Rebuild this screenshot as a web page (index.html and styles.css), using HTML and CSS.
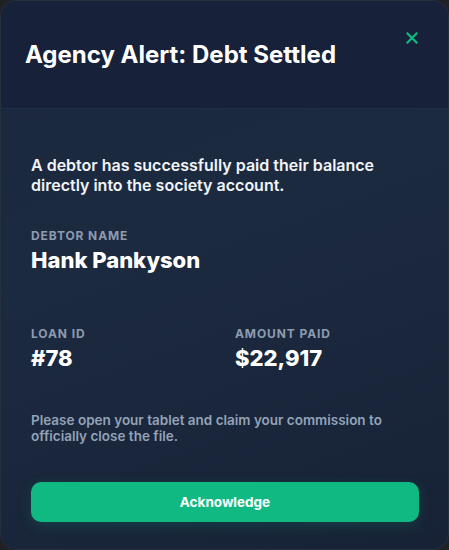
FILE: index.html
```html
<!DOCTYPE html>
<html lang="en">
    <head>
        <meta charset="UTF-8">
        <meta name="viewport" content="width=device-width, initial-scale=1.0">
        <title>Agency Alert</title>
        <link rel="stylesheet" href="styles.css">
    </head>
<body>

    <div class="alert-card">
        <div class="alert-header">
            <h2>Agency Alert: Debt Settled</h2>
            <button class="close-btn" aria-label="Close">
                <svg width="12" height="12" viewBox="0 0 12 12">
                    <path d="M1.5 1.5 L10.5 10.5 M10.5 1.5 L1.5 10.5" stroke="#10b981" stroke-width="2.2" stroke-linecap="square" fill="none"/>
                </svg>
            </button>
        </div>

        <div class="alert-body">
            <p class="intro">A debtor has successfully paid their balance directly into the society account.</p>

            <div class="field">
                <span class="label">Debtor Name</span>
                <span class="value">Hank Pankyson</span>
            </div>

            <div class="field-row">
                <div class="field">
                    <span class="label">Loan ID</span>
                    <span class="value">#78</span>
                </div>
                <div class="field">
                    <span class="label">Amount Paid</span>
                    <span class="value">$22,917</span>
                </div>
            </div>

            <p class="note">Please open your tablet and claim your commission to officially close the file.</p>

            <button class="ack-btn">Acknowledge</button>
        </div>
    </div>

</body>
</html>
```

FILE: styles.css
```css
body {
    font-family: Inter, "Noto Sans", sans-serif;
    background-color: #1f2125;
    margin: 0;
    padding: 0;
    width: 449px;
    height: 550px;
}

.alert-card {
    width: 449px;
    height: 550px;
    box-sizing: border-box;
    border-radius: 16px;
    border: 1px solid #262f3d;
    background: linear-gradient(160deg, #1a273d 0%, #1c2a40 40%, #172236 100%);
    overflow: hidden;
    display: flex;
    flex-direction: column;
}

.alert-header {
    height: 108px;
    box-sizing: border-box;
    padding: 0 24px;
    background-color: #17213a;
    border-bottom: 1px solid #1f2d45;
    display: flex;
    align-items: center;
    justify-content: space-between;
    position: relative;
}

.alert-header h2 {
    margin: 0;
    color: #ffffff;
    font-size: 24px;
    font-weight: 700;
}

.close-btn {
    position: absolute;
    top: 31px;
    right: 30px;
    background: none;
    border: none;
    padding: 0;
    width: 12px;
    height: 12px;
    cursor: pointer;
    display: flex;
}

.alert-body {
    flex: 1;
    padding: 46px 29px 27px 30px;
    display: flex;
    flex-direction: column;
}

.intro {
    margin: 0 0 34px 0;
    color: #f1f5f9;
    font-size: 16px;
    font-weight: 600;
    line-height: 20px;
}

.field {
    display: flex;
    flex-direction: column;
}

.label {
    color: #8d9bb1;
    font-size: 12px;
    font-weight: 700;
    text-transform: uppercase;
    letter-spacing: 0.9px;
    line-height: 14px;
    margin-bottom: 3px;
}

.value {
    color: #ffffff;
    font-size: 22px;
    font-weight: 800;
    line-height: 28px;
}

.field-row {
    display: grid;
    grid-template-columns: 1fr 1fr;
    gap: 20px;
    margin-top: 53px;
}

.note {
    margin: 40px 0 0 0;
    color: #94a3b8;
    font-size: 13.5px;
    font-weight: 600;
    line-height: 16px;
}

.ack-btn {
    margin-top: auto;
    width: 100%;
    height: 40px;
    border: none;
    border-radius: 10px;
    background-color: #10b981;
    color: #ffffff;
    font-family: Inter, "Noto Sans", sans-serif;
    font-size: 13.5px;
    font-weight: 700;
    box-shadow: 0 4px 14px rgba(16, 185, 129, 0.18);
    cursor: pointer;
}
```
